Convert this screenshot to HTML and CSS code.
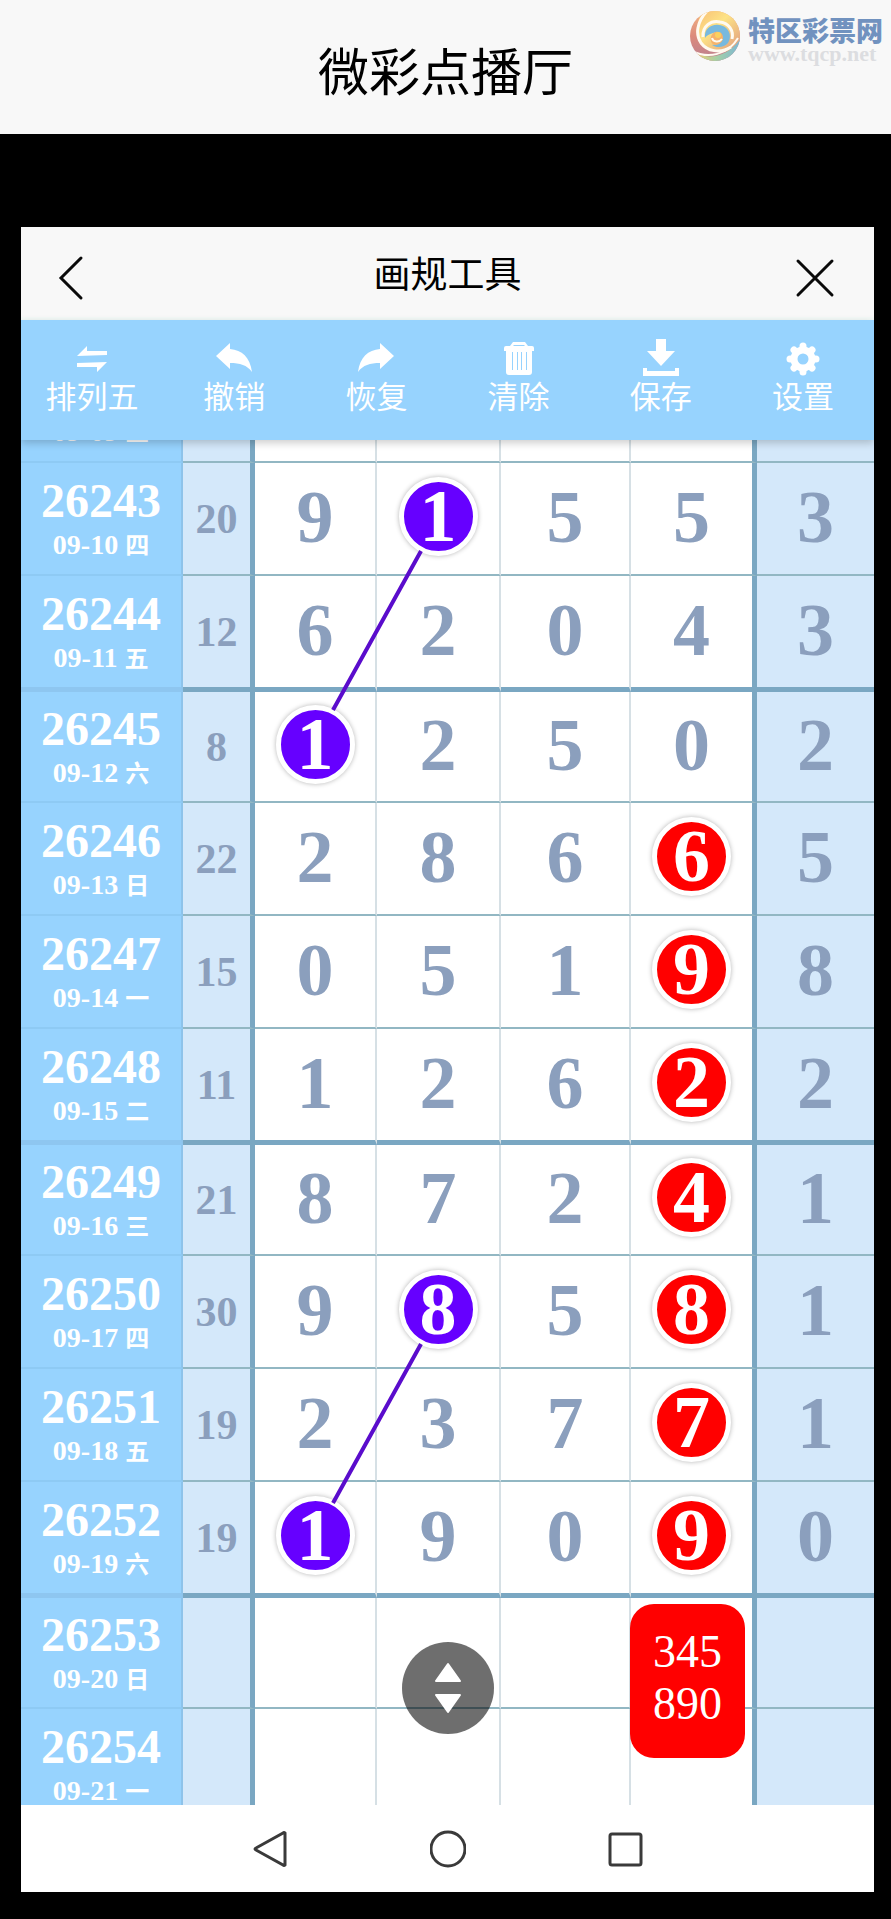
FILE: index.html
```html
<!DOCTYPE html>
<html lang="zh-CN">
<head>
    <meta charset="UTF-8">
    <meta name="viewport" content="width=device-width, initial-scale=1.0">
    <title>微彩点播厅</title>
    <link rel="stylesheet" href="styles.css">
</head>
<body>
    <header class="page-header">
        <h1>微彩点播厅</h1>
        <a class="brand" href="#">
            <svg class="brand-logo" viewBox="0 0 52 52" aria-hidden="true">
                <defs>
                    <linearGradient id="warm" x1="0" y1="0" x2="0" y2="1">
                        <stop offset="0" stop-color="#f3b583"/>
                        <stop offset="0.5" stop-color="#dc8a7c"/>
                        <stop offset="1" stop-color="#b98092"/>
                    </linearGradient>
                    <linearGradient id="sun" x1="0" y1="0" x2="1" y2="1">
                        <stop offset="0" stop-color="#f8bd74"/>
                        <stop offset="0.4" stop-color="#fde386"/>
                        <stop offset="1" stop-color="#dd937c"/>
                    </linearGradient>
                    <linearGradient id="sea" x1="0" y1="0" x2="1" y2="0">
                        <stop offset="0" stop-color="#f5cf68"/>
                        <stop offset="0.5" stop-color="#a5d0a6"/>
                        <stop offset="1" stop-color="#7ab5d6"/>
                    </linearGradient>
                    <clipPath id="disc"><circle cx="26" cy="26" r="25"/></clipPath>
                </defs>
                <g clip-path="url(#disc)">
                    <rect width="52" height="52" fill="url(#warm)"/>
                    <path d="M14 0C8 10 7 20 10 28c4 11 16 16 30 13L54 28V0z" fill="url(#sun)"/>
                    <path d="M4 42c14 8 34 6 48-14v26H8z" fill="url(#sea)"/>
                    <path d="M18 1C8 12 6 24 12 33c6 8 19 11 30 4" fill="none" stroke="#fffaf0" stroke-width="3"/>
                    <path d="M3 41c16 8 36 4 46-13" fill="none" stroke="#fffaf0" stroke-width="2"/>
                    <path d="M14 27c-1-11 8-17 17-15 9 1 14 9 12 17" fill="none" stroke="#fffaf0" stroke-width="3"/>
                    <path d="M16 28c-1-9 6-14 14-13 9 1 14 10 9 18-4 5-12 5-16 2 5 0 10-3 10-8 0-4-5-6-9-4-4 1-7 3-8 5z" fill="#78b9de"/>
                    <path d="M22 27c1-5 8-7 11-3 3 5-1 11-7 11-4-1-5-5-4-8z" fill="#f6b36b"/>
                    <path d="M23 28c1 4 7 5 10 1" fill="none" stroke="#fffaf0" stroke-width="2"/>
                    <circle cx="29" cy="25" r="3" fill="#fbd15f"/>
                </g>
            </svg>
            <span class="brand-text">
                <span class="brand-name">特区彩票网</span>
                <span class="brand-url">www.tqcp.net</span>
            </span>
        </a>
    </header>

    <main class="phone">
        <div class="title-bar">
            <button class="icon-btn" aria-label="返回">
                <svg width="24" height="44" viewBox="0 0 24 44"><path d="M21 2L1 22l20 20"/></svg>
            </button>
            <h2>画规工具</h2>
            <button class="icon-btn" aria-label="关闭">
                <svg width="38" height="38" viewBox="0 0 38 38"><path d="M1 2l34 34M35 2L1 36"/></svg>
            </button>
        </div>

        <nav class="toolbar">
            <button>
                <svg viewBox="0 0 36 36"><path d="M3 15L13 5v5h20v4zM33 21L23 31v-5H3v-4z"/></svg>
                排列五
            </button>
            <button>
                <svg viewBox="0 0 36 36"><path d="M0 15L14 2v6c12 1 20 8 22 23-5-7-12-9-22-9v6z"/></svg>
                撤销
            </button>
            <button>
                <svg viewBox="0 0 36 36"><path d="M36 15L22 2v6C10 9 2 16 0 31c5-7 12-9 22-9v6z"/></svg>
                恢复
            </button>
            <button>
                <svg viewBox="0 0 36 36"><path fill-rule="evenodd" d="M12 1h12l3 4h4q2 0 2 2v3h-2v21q0 3-3 3H8q-3 0-3-3V10H3V7q0-2 2-2h4zM13 4l-1 1h12l-1-1zM11 11v18h1V11zM16 11v18h1V11zM20 11v18h1V11zM25 11v18h1V11z"/></svg>
                清除
            </button>
            <button>
                <svg viewBox="0 0 36 36"><path d="M13-2h10v12h9L18 25 4 10h9zM0 27h4v3h28v-3h4v8H0z"/></svg>
                保存
            </button>
            <button>
                <svg viewBox="0 0 36 36">
                    <circle cx="18" cy="18" r="9" fill="none" stroke="#fff" stroke-width="7"/>
                    <path fill="none" stroke="#fff" stroke-width="7" stroke-linecap="round" d="M18 5v2M18 29v2M5 18h2M29 18h2M9 9l1 1M26 26l1 1M27 9l-1 1M10 26l-1 1"/>
                </svg>
                设置
            </button>
        </nav>

        <div class="chart">
            <div class="board">
                <table class="trend">
                    <colgroup>
                        <col class="col-issue">
                        <col class="col-sum">
                        <col class="col-d1">
                        <col class="col-d2">
                        <col class="col-d3">
                        <col class="col-d4">
                        <col class="col-d5">
                    </colgroup>
                    <tbody id="trend-list"></tbody>
                </table>
                <svg class="links" viewBox="0 0 853 1472" preserveAspectRatio="none" aria-hidden="true">
                    <path d="M400 201L312 360M400 994L312 1153"/>
                </svg>
            </div>
            <button class="scroll-btn" aria-label="滚动">
                <svg width="28" height="52" viewBox="0 0 28 52"><path d="M14 2l12 17H2zM14 50l12-17H2z"/></svg>
            </button>
        </div>

        <nav class="system-nav">
            <button aria-label="后退"><svg width="36" height="40" viewBox="0 0 36 40"><path d="M33 4v32q-1 1-2 0L4 21q-2-1 0-2L31 4q1-1 2 0z"/></svg></button>
            <button aria-label="主屏"><svg width="36" height="40" viewBox="0 0 36 40"><circle cx="18" cy="20" r="17"/></svg></button>
            <button aria-label="最近"><svg width="36" height="40" viewBox="0 0 36 40"><rect x="2" y="5" width="31" height="31" rx="2"/></svg></button>
        </nav>
    </main>

    <script src="script.js"></script>
</body>
</html>
```

FILE: styles.css
```css
:root {
    --sky: #97d3fe;
    --pale: #d4e8fa;
    --digit: #8b9fbd;
    --line: #92b7c3;
    --line-bold: #7aa7c2;
    --line-soft: #d6e0e5;
    --purple: #6600ff;
    --red: #ff0000;
    --sans: "Noto Sans CJK SC", sans-serif;
    --serif: "Liberation Serif", "Noto Sans CJK SC", serif;
}

* {
    box-sizing: border-box;
}

body {
    margin: 0;
    height: 100vh;
    display: flex;
    flex-direction: column;
    background: #000;
    font-family: var(--sans);
}

button {
    margin: 0;
    padding: 0;
    border: none;
    background: none;
    font-family: inherit;
    cursor: pointer;
}

h1, h2 {
    margin: 0;
    font-weight: 400;
    color: #000;
}

.page-header {
    position: relative;
    flex: none;
    height: 134px;
    padding-top: 4px;
    display: flex;
    align-items: center;
    justify-content: center;
    background: #f8f8f8;
}

.page-header h1 {
    font-size: 51px;
    line-height: 60px;
}

/* site mark over the header */
.brand {
    position: absolute;
    top: 10px;
    right: 8px;
    display: flex;
    gap: 7px;
    text-decoration: none;
}

.brand-logo {
    width: 52px;
    height: 52px;
}

.brand-text {
    display: flex;
    flex-direction: column;
    padding-top: 6px;
}

.brand-name {
    font-size: 27px;
    line-height: 28px;
    font-weight: 900;
    color: #7192bf;
}

.brand-url {
    font-family: var(--serif);
    font-size: 22px;
    line-height: 20px;
    font-weight: 700;
    color: #dcdde0;
}

.phone {
    flex: 1;
    min-height: 0;
    margin: 93px 17px 27px 21px;
    display: flex;
    flex-direction: column;
    background: #fff;
}

.title-bar {
    flex: none;
    height: 93px;
    padding: 0 39px;
    display: flex;
    align-items: center;
    justify-content: space-between;
    background: #f8f8f8;
    border-bottom: 3px solid #f4faf8;
}

.title-bar h2 {
    font-size: 37px;
    line-height: 48px;
}

.icon-btn {
    width: 40px;
    display: flex;
    padding-top: 12px;
}

.icon-btn:last-child {
    justify-content: flex-end;
}

.icon-btn svg {
    overflow: visible;
}

.icon-btn path {
    fill: none;
    stroke: #0a0a0a;
    stroke-width: 3;
    stroke-linecap: round;
}

.toolbar {
    position: relative;
    z-index: 2;
    flex: none;
    height: 120px;
    display: flex;
    background: var(--sky);
    box-shadow: 0 3px 8px rgba(0, 0, 0, 0.2);
}

.toolbar button {
    flex: 1;
    display: flex;
    flex-direction: column;
    align-items: center;
    padding-top: 21px;
    color: #fff;
    font-size: 31px;
    line-height: 36px;
    font-weight: 400;
}

.toolbar svg {
    width: 36px;
    height: 36px;
    fill: #fff;
    overflow: visible;
}

.chart {
    position: relative;
    flex: 1;
    min-height: 0;
    overflow: hidden;
}

/* scrolled down by most of the first row */
.board {
    position: relative;
    margin-top: -90px;
}

.trend {
    width: 100%;
    table-layout: fixed;
    border-collapse: separate;
    border-spacing: 0;
    font-family: var(--serif);
    font-weight: 700;
    color: var(--digit);
}

.col-issue { width: 162px; }
.col-sum { width: 72px; }
.col-d1 { width: 122px; }
.col-d2 { width: 124px; }
.col-d3 { width: 130px; }
.col-d4 { width: 126px; }
.col-d5 { width: 117px; }

.trend tr {
    height: 113px;
}

.trend tr.week-end {
    height: 116px;
}

.trend tr.week-start {
    height: 111px;
}

.trend th,
.trend td {
    position: relative;
    padding: 0;
    text-align: center;
    vertical-align: middle;
    border-bottom: 2px solid var(--line);
}

.trend .issue {
    padding-top: 6px;
    background: var(--sky);
    color: #fff;
    border-right: 2px solid #8ec3ea;
    border-bottom-color: #8ecaf4;
}

.issue-no {
    display: block;
    font-size: 48px;
    line-height: 48px;
}

.issue-date {
    display: block;
    font-size: 28px;
    line-height: 40px;
}

.issue-day {
    font-size: 24px;
}

.trend .sum {
    background: var(--pale);
    font-size: 42px;
    border-right: 5px solid var(--line-bold);
}

.trend .digit {
    padding-bottom: 4px;
    font-size: 74px;
    line-height: 80px;
    border-right: 2px solid var(--line-soft);
}

.trend .digit-4 {
    border-right: 5px solid var(--line-bold);
}

.trend .digit-5 {
    background: var(--pale);
    border-right: none;
}

.trend .week-end td {
    border-bottom: 5px solid var(--line-bold);
}

.trend .week-end .issue {
    border-bottom: 5px solid #8ec6f0;
}

.ball {
    display: block;
    width: 79px;
    height: 79px;
    margin: 0 auto;
    border: 5px solid #fff;
    border-radius: 50%;
    line-height: 69px;
    color: #fff;
    box-shadow: 0 0 5px rgba(0, 0, 0, 0.3);
}

.ball-purple {
    background: var(--purple);
}

.ball-red {
    background: var(--red);
}

.pick {
    position: absolute;
    z-index: 1;
    top: 6px;
    left: -1px;
    width: 115px;
    padding: 22px 0 28px;
    border-radius: 24px;
    background: var(--red);
    color: #fff;
    font-size: 46px;
    line-height: 52px;
    font-weight: 400;
}

.links {
    position: absolute;
    inset: 0;
    width: 100%;
    height: 100%;
    pointer-events: none;
}

.links path {
    fill: none;
    stroke: #5a0ccc;
    stroke-width: 4;
}

.scroll-btn {
    position: absolute;
    bottom: 71px;
    left: 50%;
    width: 92px;
    height: 92px;
    margin-left: -46px;
    display: flex;
    align-items: center;
    justify-content: center;
    border-radius: 50%;
    background: rgba(0, 0, 0, 0.57);
}

.scroll-btn path {
    fill: #fff;
    stroke: #fff;
    stroke-width: 2;
    stroke-linejoin: round;
}

.system-nav {
    flex: none;
    height: 87px;
    display: flex;
    align-items: center;
    justify-content: center;
    gap: 142px;
    background: #fff;
}

.system-nav button {
    display: flex;
}

.system-nav svg {
    fill: none;
    stroke: #3a3a3a;
    stroke-width: 3;
}
```

FILE: script.js
```js
// digits: "p" prefix = purple ball, "r" prefix = red ball
const draws = [
    { issue: '26242', date: '09-09', day: '三', sum: '', digits: ['', '', '', '', ''] },
    { issue: '26243', date: '09-10', day: '四', sum: 20, digits: ['9', 'p1', '5', '5', '3'] },
    { issue: '26244', date: '09-11', day: '五', sum: 12, digits: ['6', '2', '0', '4', '3'] },
    { issue: '26245', date: '09-12', day: '六', sum: 8, digits: ['p1', '2', '5', '0', '2'] },
    { issue: '26246', date: '09-13', day: '日', sum: 22, digits: ['2', '8', '6', 'r6', '5'] },
    { issue: '26247', date: '09-14', day: '一', sum: 15, digits: ['0', '5', '1', 'r9', '8'] },
    { issue: '26248', date: '09-15', day: '二', sum: 11, digits: ['1', '2', '6', 'r2', '2'] },
    { issue: '26249', date: '09-16', day: '三', sum: 21, digits: ['8', '7', '2', 'r4', '1'] },
    { issue: '26250', date: '09-17', day: '四', sum: 30, digits: ['9', 'p8', '5', 'r8', '1'] },
    { issue: '26251', date: '09-18', day: '五', sum: 19, digits: ['2', '3', '7', 'r7', '1'] },
    { issue: '26252', date: '09-19', day: '六', sum: 19, digits: ['p1', '9', '0', 'r9', '0'] },
    { issue: '26253', date: '09-20', day: '日', sum: '', digits: ['', '', '', '', ''], pick: ['345', '890'] },
    { issue: '26254', date: '09-21', day: '一', sum: '', digits: ['', '', '', '', ''] }
];

function digitHtml(value) {
    if (value[0] === 'p') return `<span class="ball ball-purple">${value[1]}</span>`;
    if (value[0] === 'r') return `<span class="ball ball-red">${value[1]}</span>`;
    return value;
}

const list = document.getElementById('trend-list');

draws.forEach((draw, i) => {
    const row = document.createElement('tr');
    // a bold rule every four draws
    if (i % 4 === 2) row.className = 'week-end';
    if (i % 4 === 3) row.className = 'week-start';

    const cells = draw.digits.map((value, n) => {
        const pick = draw.pick && n === 3 ? `<div class="pick">${draw.pick.join('<br>')}</div>` : '';
        return `<td class="digit digit-${n + 1}">${digitHtml(value)}${pick}</td>`;
    }).join('');

    row.innerHTML = `
        <th class="issue" scope="row">
            <span class="issue-no">${draw.issue}</span>
            <span class="issue-date">${draw.date} <span class="issue-day">${draw.day}</span></span>
        </th>
        <td class="sum">${draw.sum}</td>
        ${cells}
    `;
    list.appendChild(row);
});
```
